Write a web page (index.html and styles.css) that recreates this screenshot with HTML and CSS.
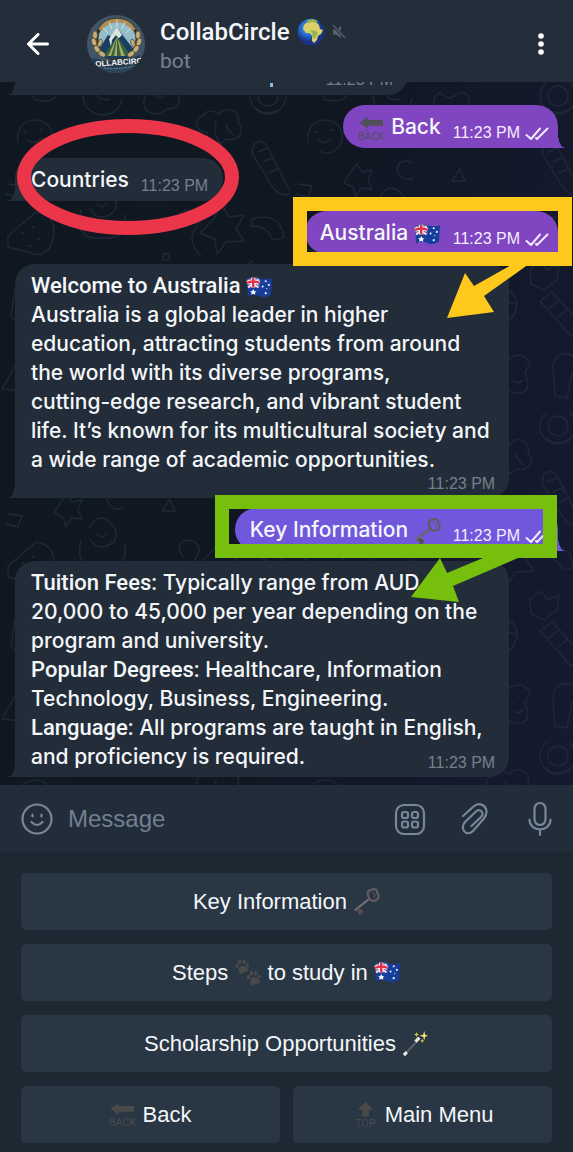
FILE: index.html
```html
<!DOCTYPE html>
<html lang="en">
<head>
<meta charset="utf-8">
<meta name="viewport" content="width=device-width, initial-scale=1">
<title>CollabCircle</title>
<link rel="stylesheet" href="styles.css">
</head>
<body>
<svg class="defs" aria-hidden="true">
  <symbol id="flag" viewBox="0 0 26 22">
    <path d="M1 3Q7 0 13 2T25 2L24 18Q18 22 12 19T2 20Z" fill="#173e9b"/>
    <path d="M1 3Q7 0 13 2V11Q7 9 2 12Z" fill="#5263ad"/>
    <path d="M2 4l10 7M2 11L12 3" stroke="#f3dbe5" stroke-width="2"/>
    <path d="M7 1.500V11M1 6.500Q7 4 13 6.500" stroke="#fff" stroke-width="4" fill="none"/>
    <path d="M7 1.500V11M1 6.500Q7 4 13 6.500" stroke="#e5304b" stroke-width="2.400" fill="none"/>
    <path d="M7 12.500l1 2 2 .2-1.500 1.300.5 2-2-1-2 1 .5-2L4 14.700l2-.2z" fill="#fff"/>
    <g fill="#e8eefc"><circle cx="19" cy="5" r="1"/><circle cx="16" cy="10" r="1"/><circle cx="22" cy="8.500" r="1"/><circle cx="20" cy="12" r=".6"/><circle cx="19" cy="16.500" r="1.100"/></g>
  </symbol>
  <symbol id="key" viewBox="0 0 28 28">
    <g fill="none" stroke="#625b62">
      <path d="M17 11L2 23" stroke-width="2.600"/>
      <path d="M17 10.500C14 7 15 2 19 2c3-2 7 0 6 3 3 3 1 8-3 8-2 1-4 0-5-2.500z" stroke-width="2.200"/>
      <path d="M20 5q4 0 2 5" stroke-width="1"/>
    </g>
    <path d="M16 12L2 23" stroke="#938989" stroke-width=".7"/>
    <path d="M5 21l4 1 2 3-2 1-1 2-3-1 1-2-3-2z" fill="#5b4d4d"/>
  </symbol>
  <symbol id="paws" viewBox="0 0 28 28">
    <path d="M5 13c-1-3 1-6 4-6 2 0 5 2 6 4 0 3-3 2-5 3-2 2-4 2-5-1z"/><ellipse cx="3" cy="7" rx="1.700" ry="2.300"/><ellipse cx="6" cy="3" rx="1.800" ry="2.300"/><ellipse cx="10.500" cy="3" rx="1.700" ry="2.300"/><ellipse cx="14" cy="6.500" rx="1.600" ry="2"/>
    <g transform="translate(12 12)"><path d="M5 13c-1-3 1-6 4-6 2 0 5 2 6 4 0 3-3 2-5 3-2 2-4 2-5-1z"/><ellipse cx="3" cy="7" rx="1.700" ry="2.300"/><ellipse cx="6" cy="3" rx="1.800" ry="2.300"/><ellipse cx="10.500" cy="3" rx="1.700" ry="2.300"/><ellipse cx="14" cy="6.500" rx="1.600" ry="2"/></g>
  </symbol>
  <symbol id="wand" viewBox="0 0 28 28">
    <path d="M3 25L18 9" stroke="#5b6068" stroke-width="2.200"/>
    <path d="M2 26l3-3M14 12l4-4" stroke="#eee9df" stroke-width="3.200"/>
    <path d="M23 1l1 4 3 1-3 1-1 4-1-4-4-1 4-1z" fill="#f7ef76"/>
    <path d="M15 2l.7 2 2 .7-2 .7-.7 2-.7-2-2-.7 2-.7zM21 9l.7 1.500 1.500.7-1.500.7-.7 1.500-.7-1.500-1.500-.7 1.500-.7z" fill="#d4cd3c"/>
  </symbol>
  <symbol id="back" viewBox="0 0 28 28">
    <path d="M1.500 8L10 2v3.200h16v6H10v3z"/>
    <text x="14" y="26" class="emoji-text">BACK</text>
  </symbol>
  <symbol id="top" viewBox="0 0 28 28">
    <path d="M14 1l8 8h-4.500v7h-7V9H6z"/>
    <text x="14" y="27" class="emoji-text">TOP</text>
  </symbol>
  <symbol id="ticks" viewBox="0 0 24 14"><path d="M1.500 8l4.500 4L15 1.500M11 11l1 1L22.500 1.500" fill="none" stroke="#f4eaff" stroke-width="2" stroke-linecap="round" stroke-linejoin="round"/></symbol>
</svg>

<main class="app">
  <header class="header">
    <button class="icon-button" aria-label="Go back">
      <svg width="22" height="22" viewBox="0 0 22 22"><path d="M11 1.500L1.500 11l9.500 9.500M2 11h18.500" class="back-arrow"/></svg>
    </button>
    <svg class="avatar" width="58" height="58" viewBox="0 0 58 58" role="img" aria-label="CollabCircle">
      <defs><clipPath id="round"><circle cx="29" cy="29" r="29"/></clipPath></defs>
      <g clip-path="url(#round)">
        <path d="M0 0h58v58H0z" fill="#405568"/>
        <path d="M0 42q20 8 58 4v12H0z" fill="#2b455d"/>
        <circle cx="30" cy="24" r="20" fill="#93bdcb" stroke="#31321f" stroke-width="3"/>
        <path d="M13 15a20 20 0 0 1 34 0" fill="none" stroke="#b08a59" stroke-width="4"/>
        <path d="M30 5v9M22 7l3 7M38 7l-3 7M16 13l5 5M44 13l-5 5" stroke="#d7e5c7" stroke-width="1"/>
        <path d="M11 36l10-16 4 2 5-10 7 10 12 15-5 6H16z" fill="#193e61"/>
        <path d="M30 12l5 8-4 4-2-4-4 5-1 7-2-8z" fill="#dce4df"/>
        <path d="M30 21L17 41h27z" fill="#385f3f"/>
        <path d="M30 22l-9 19h3zM30 22l-3 19h3zM30 22l4 19h4z" fill="#a1aa65"/>
        <path d="M9 17q-3 16 10 24M50 17q4 16-9 24" fill="none" stroke="#775d31" stroke-width="2"/>
        <g fill="#c5ae79" stroke="#47391f" stroke-width=".6">
          <ellipse cx="8" cy="20" rx="2.500" ry="4"/><ellipse cx="7" cy="27" rx="2.500" ry="4" transform="rotate(-18 7 27)"/><ellipse cx="10" cy="34" rx="2.500" ry="4" transform="rotate(-35 10 34)"/><ellipse cx="15" cy="39" rx="2.500" ry="4" transform="rotate(-55 15 39)"/><ellipse cx="13" cy="28" rx="2" ry="4" transform="rotate(20 13 28)"/>
          <ellipse cx="51" cy="20" rx="2.500" ry="4"/><ellipse cx="52" cy="27" rx="2.500" ry="4" transform="rotate(18 52 27)"/><ellipse cx="49" cy="34" rx="2.500" ry="4" transform="rotate(35 49 34)"/><ellipse cx="44" cy="39" rx="2.500" ry="4" transform="rotate(55 44 39)"/><ellipse cx="46" cy="28" rx="2" ry="4" transform="rotate(-20 46 28)"/>
        </g>
        <path d="M5 43q25 7 48-3v9q-24 6-45 1z" fill="#25394b"/>
        <text x="32" y="50" class="avatar-name" transform="rotate(-4 32 50)">OLLABCIRC</text>
        <path d="M17 53q14 2 29-2" stroke="#6a8492" stroke-width="1" fill="none" stroke-dasharray="2 1"/>
      </g>
    </svg>
    <div class="title">
      <h1>CollabCircle
        <svg width="28" height="28" viewBox="0 0 28 28"><defs><radialGradient id="sea" cx=".4" cy=".35"><stop offset="0" stop-color="#58b9f5"/><stop offset=".6" stop-color="#2367c9"/><stop offset="1" stop-color="#193282"/></radialGradient></defs><circle cx="14" cy="14" r="13.500" fill="url(#sea)"/><path d="M9 5l5-2 5 1 3 3 1 4 3 1-2 4-3 2-1 4-3 3-2-2v-5l-2-3-4 0-3-4 1-4z" fill="#ddd06a"/><path d="M10 2l6-1 5 2-2 2-4-1-4 1zM13 12l6 1 2 2-3 5-2 1-1-6z" fill="#93b54d"/></svg>
        <svg class="muted" width="14" height="14" viewBox="0 0 14 14"><path d="M1 4.500h3L9 1v12L4 9.500H1z" fill="#57626f"/><path d="M1 0l12 13" stroke="#222d3a" stroke-width="3"/><path d="M1 0l12 13" stroke="#57626f" stroke-width="1.300" fill="none"/></svg>
      </h1>
      <p>bot</p>
    </div>
    <button class="icon-button" aria-label="More options">
      <svg width="8" height="24" viewBox="0 0 8 24" fill="#fff"><circle cx="4" cy="4" r="2.800"/><circle cx="4" cy="12" r="2.800"/><circle cx="4" cy="20" r="2.800"/></svg>
    </button>
  </header>

  <section class="chat" aria-label="Conversation">
    <svg class="wallpaper" aria-hidden="true">
      <defs>
        <pattern id="doodles" width="290" height="330" patternUnits="userSpaceOnUse">
          <g fill="none" stroke="#1d2737" stroke-width="1.400" stroke-linecap="round" stroke-linejoin="round">
            <path d="M35 18q-9-16 4-17 12 0 20 4-1 14-14 14zM18 60c-5-25 30-30 34-8 2 13-12 24-22 17M24 50h2M40 48h2M28 58q7 6 13-2"/>
            <path d="M84 6q-5 22 17 27 18 0 21-16M96 12q4 8 14 5M146 13c-8 14 7 24 18 16 4-4 10 0 14-6 6-12-8-16-14-9-7 7-11-7-18-1z"/>
            <path d="M204 33c-12 3-9 18 3 17-2 12 14 16 19 7 12 3 20-7 12-16 4-12-12-18-18-9-8-4-14-4-16 1zM216 39q-3 18 6 23M226 42q2 8 8 11"/>
            <circle cx="268" cy="14" r="18"/><circle cx="268" cy="14" r="10"/><path d="M256 26q9 9 24 1"/>
            <path d="M254 62q9-7 15 6l22 43q-9 6-19-7l-20-33zM258 70l9-4M263 80l11-5M269 91l10-5"/>
            <path d="M8 154l28-24q25 4 15 34-8 12-20 7L8 165zM22 151h2M32 145h2M38 157h2M29 164h2"/>
            <path d="M81 128q-7 30 19 28 28 3 25-23M90 115q10-18 24 0 6 12-5 18-12 6-19-6M97 122q5 6 10-1"/>
            <path d="M183 145q-10-15 6-17 16 4 7 18-10 13 5 28M214 137l7-16 8 14 15-2-8 14 8 12-18 1-9 12-2-15-15-6z"/>
            <path d="M252 137q28-8 32 18-12 7-16-5-8-8-17-5zM163 172h6v6h-6zM240 187l12-8 5 9 12-5-2 15-13 10-13-6z"/>
            <path d="M15 207l22-12 27 15-4 27-29 15-20-18zM20 210l20 11 23-11M40 221l-5 26"/>
            <path d="M83 205q12-9 16 4 10-12 16 0 0 14-17 23-15-13-15-27zM131 221h30l-4 32h-21zM160 225q14-3 12 12-4 7-13 5"/>
            <path d="M191 213c18-16 40-4 35 14-4 18-25 17-33 7M203 210q7-7 14 0M200 222l8 2M218 220l7 2"/>
            <path d="M250 219l12-9 31 34-12 10zM259 226l10-8M268 235l10-8"/>
            <path d="M14 286l11-20 14 18 20-5-7 23 12 10-25 4-13 13-4-20-20-2zM95 274q-21 0-19 18 9 27 35 13 19-21-3-31-8 8-13 0zM90 286h2M102 290h2M91 298h2"/>
            <path d="M146 281l32-16 16 40-31 17zM153 289l28-14M157 297l28-13M163 308l22-11M220 276q-11 5-5 16-9 14 9 19 19 1 12-16-2-7 5-14-10-13-21-5zM222 291h1M233 291h1M223 299q6 4 10-1"/>
            <path d="M263 288q0-18 16-16 15 8 3 19l-5 25-12-2zM60 91l7-9 5 8 10-2-4 10 4 9-11-1-5 9-3-10-9-4zM122 81q-12-6-15 6 4 14 16 9M170 87l-8 12h13zM8 102l14 2-4 11-12-3"/>
          </g>
        </pattern>
      </defs>
      <rect width="100%" height="100%" fill="url(#doodles)"/>
    </svg>

    <article class="bubble incoming earlier"><span class="link-dot"></span><time>11:23 PM</time></article>

    <article class="bubble outgoing">
      <p><svg class="emoji back-emoji"><use href="#back"/></svg>Back</p><time>11:23 PM</time><svg class="ticks"><use href="#ticks"/></svg>
    </article>

    <article class="bubble incoming">
      <p>Countries</p><time>11:23 PM</time>
      <svg class="mark ring" viewBox="0 0 222 116"><ellipse cx="111" cy="58" rx="104" ry="51" fill="none" stroke="#eb3549" stroke-width="14"/></svg>
    </article>

    <article class="bubble outgoing">
      <p>Australia <svg class="emoji"><use href="#flag"/></svg></p><time>11:23 PM</time><svg class="ticks"><use href="#ticks"/></svg>
      <svg class="mark yellow" viewBox="0 0 280 124"><path d="M7 7h265v55H7z" fill="none" stroke="#fec81d" stroke-width="14"/><path d="M220 67l16 0-45 32 10 16-47 6 18-45 9 13z" fill="#fec81d"/></svg>
    </article>

    <article class="bubble incoming long">
      <div class="copy">
        <h2>Welcome to Australia <svg class="emoji"><use href="#flag"/></svg></h2>
        <p>Australia is a global leader in higher education, attracting students from around<br>the world with its diverse programs,<br>cutting-edge research, and vibrant student<br>life. It’s known for its multicultural society and a wide range of academic opportunities.</p>
      </div>
      <time>11:23 PM</time>
    </article>

    <article class="bubble outgoing violet">
      <p>Key Information <svg class="emoji"><use href="#key"/></svg></p><time>11:23 PM</time><svg class="ticks"><use href="#ticks"/></svg>
      <svg class="mark green" viewBox="0 0 342 108"><path d="M7 7h328v49H7z" fill="none" stroke="#76c00d" stroke-width="14"/><path d="M268 63h35l-65 28 6 16-48-5 29-39 7 15z" fill="#76c00d"/></svg>
    </article>

    <article class="bubble incoming long inline-time">
      <div class="copy">
        <p><strong>Tuition Fees:</strong> Typically range from AUD<br>20,000 to 45,000 per year depending on the program and university.</p>
        <p><strong>Popular Degrees:</strong> Healthcare, Information Technology, Business, Engineering.</p>
        <p><strong>Language:</strong> All programs are taught in English, and proficiency is required.</p>
      </div>
      <time>11:23 PM</time>
    </article>
  </section>

  <form class="composer">
    <button type="button" class="icon-button" aria-label="Emoji">
      <svg width="32" height="32" viewBox="0 0 32 32"><circle cx="16" cy="16" r="14.500"/><path d="M10.500 19q5.500 6 11 0M11.500 11.500v2M20.500 11.500v2"/></svg>
    </button>
    <input type="text" placeholder="Message" aria-label="Message">
    <button type="button" class="icon-button" aria-label="Bot keyboard">
      <svg width="32" height="32" viewBox="0 0 32 32"><rect x="2" y="2" width="28" height="29" rx="8"/><rect x="8" y="9" width="6" height="6" rx="2"/><rect x="18" y="9" width="6" height="6" rx="2"/><rect x="8" y="18.500" width="6" height="6" rx="2"/><rect x="18" y="18.500" width="6" height="6" rx="2"/></svg>
    </button>
    <button type="button" class="icon-button" aria-label="Attach">
      <svg width="32" height="32" viewBox="0 0 32 32"><path d="M4 13L14.500 3.500C19 -.5 25 1 27 6c1.500 4 0 7-2.500 10L14 28c-3 3-7 3-9 0s-1.500-6 1-9L17 8.500c2-2 5-1.500 6 .5 1 1.800.5 3.500-1 5L12.500 23"/></svg>
    </button>
    <button type="button" class="icon-button" aria-label="Voice message">
      <svg width="32" height="36" viewBox="0 0 32 36"><rect x="10.500" y="2" width="11" height="22" rx="5.500"/><path d="M5.500 18.500c0 13 21 13 21 0M16 28.500V34"/></svg>
    </button>
  </form>

  <nav class="keyboard" aria-label="Bot replies">
    <button class="reply wide">Key Information <svg class="emoji"><use href="#key"/></svg></button>
    <button class="reply wide">Steps <svg class="emoji dim"><use href="#paws"/></svg> to study in <svg class="emoji"><use href="#flag"/></svg></button>
    <button class="reply wide">Scholarship Opportunities <svg class="emoji"><use href="#wand"/></svg></button>
    <button class="reply"><svg class="emoji dim"><use href="#back"/></svg> Back</button>
    <button class="reply"><svg class="emoji dim"><use href="#top"/></svg> Main Menu</button>
  </nav>
</main>
</body>
</html>
```
FILE: styles.css
```css
* { box-sizing: border-box; }

body {
  margin: 0;
  background: #1d2733;
  color: #f4f7fa;
  font-family: Inter, "Liberation Sans", sans-serif;
}

h1, h2, p { margin: 0; }

.defs { display: none; }

.app {
  display: flex;
  flex-direction: column;
  min-height: 100vh;
}

.icon-button {
  display: flex;
  padding: 0;
  border: 0;
  background: none;
}

/* Header */
.header {
  display: flex;
  align-items: center;
  height: 82px;
  padding: 6px 28px 0 27px;
  background: #242d3a;
  font-family: Roboto, sans-serif;
}

.back-arrow {
  fill: none;
  stroke: #fff;
  stroke-width: 3;
  stroke-linecap: round;
  stroke-linejoin: round;
}

.avatar { margin-left: 38px; }

.avatar-name {
  fill: #f4f6f7;
  font: bold 8px "Liberation Sans", sans-serif;
  text-anchor: middle;
}

.title {
  flex: 1;
  padding: 4px 0 0 15px;
}

.title h1 {
  display: flex;
  align-items: center;
  gap: 7px;
  font-size: 24px;
  line-height: 30px;
  font-weight: 500;
}

.title p {
  color: #77828f;
  font-size: 21px;
  line-height: 28px;
}

/* Conversation */
.chat {
  position: relative;
  display: flex;
  flex: 1;
  flex-direction: column;
  gap: 10px;
  padding: 0 15px 8px;
  overflow: hidden;
  background: linear-gradient(100deg, #0f1820, #101722 50%, #151a30);
}

.wallpaper {
  position: absolute;
  inset: 0;
  width: 100%;
  height: 100%;
}

.bubble {
  --fill: #232d39;
  position: relative;
  display: flex;
  align-items: flex-end;
  gap: 12px;
  padding: 7px 15px;
  background: var(--fill);
  font-size: 21px;
  font-weight: 500;
  line-height: 29px;
}

.bubble::before {
  content: "";
  position: absolute;
  bottom: 0;
  width: 8px;
  height: 14px;
}

.incoming {
  align-self: flex-start;
  padding-left: 16px;
  border-radius: 20px 20px 20px 0;
}

.incoming::before {
  left: -7px;
  background: radial-gradient(ellipse 7px 14px at 0 0, transparent 96%, var(--fill));
}

.outgoing {
  --fill: #8045c0;
  align-self: flex-end;
  padding-right: 9px;
  border-radius: 22px 22px 0 22px;
}

.outgoing::before {
  right: -7px;
  background: radial-gradient(ellipse 7px 14px at 100% 0, transparent 96%, var(--fill));
}

.violet { --fill: #7057dc; }

.bubble time {
  color: #75808d;
  font-family: "Liberation Sans", sans-serif;
  font-size: 16px;
  font-weight: 400;
  line-height: 16px;
  white-space: nowrap;
}

.outgoing time { color: #f5edff; }

.ticks {
  width: 24px;
  height: 14px;
  margin-left: -7px;
}

.earlier {
  justify-content: space-between;
  width: 393px;
  height: 43px;
  margin-top: -30px;
}

.link-dot {
  width: 3px;
  height: 4px;
  margin: 0 0 1px 239px;
  background: #86bce0;
}

.long {
  display: grid;
  gap: 2px;
  width: 91%;
  padding-right: 14px;
  padding-bottom: 6px;
}

.long time { justify-self: end; }

.long h2, .long strong {
  font-family: Roboto, sans-serif;
  font-size: 22px;
  font-weight: 500;
  line-height: 29px;
}

.inline-time .copy, .inline-time time { grid-area: 1 / 1; }

.inline-time time { align-self: end; }

.emoji {
  width: 27px;
  height: 27px;
  vertical-align: -6px;
  fill: #50505a;
}

.bubble .emoji { margin: -2px 0; }

.bubble .back-emoji { margin-right: 6px; }

.emoji-text {
  font: 11px Roboto, sans-serif;
  text-anchor: middle;
}

/* Hand-drawn marks over the messages */
.mark {
  position: absolute;
  z-index: 1;
}

.ring { left: 2px; top: -39px; width: 222px; height: 116px; }
.yellow { right: -15px; top: -14px; width: 280px; height: 124px; }
.green { right: 1px; top: -13px; width: 342px; height: 108px; }

/* Message field */
.composer {
  display: flex;
  align-items: center;
  height: 67px;
  padding: 0 17px 0 21px;
  background: #222d3a;
}

.composer svg {
  fill: none;
  stroke: #78869a;
  stroke-width: 2.200;
  stroke-linecap: round;
}

.composer input {
  flex: 1;
  min-width: 0;
  padding: 0 15px;
  border: 0;
  outline: 0;
  background: none;
  color: #f4f7fa;
  font: 24px "Liberation Sans", sans-serif;
}

.composer input::placeholder { color: #718092; opacity: 1; }

.composer .icon-button + .icon-button { margin-left: 33px; }

/* Bot keyboard */
.keyboard {
  display: grid;
  grid-template-columns: 1fr 1fr;
  gap: 14px 13px;
  padding: 21px 21px 9px;
  background: #1d2832;
}

.reply {
  height: 57px;
  padding: 0;
  border: 0;
  border-radius: 5px;
  background: #293644;
  color: #f4f7fa;
  font: 22px "Liberation Sans", sans-serif;
}

.wide { grid-column: 1 / -1; }

.dim { fill: #4b4a4b; }
```
